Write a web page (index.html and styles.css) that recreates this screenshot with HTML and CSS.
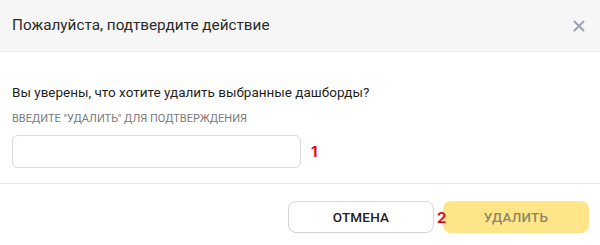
FILE: index.html
```html
<!DOCTYPE html>
<html lang="ru">
<head>
<meta charset="utf-8">
<link rel="stylesheet" href="styles.css">
</head>
<body>
<div class="modal">
  <div class="header">
    <div class="title">Пожалуйста, подтвердите действие</div>
    <svg class="close" width="12" height="12" viewBox="0 0 12 12"><path d="M1.5 1.5 L10.5 10.5 M10.5 1.5 L1.5 10.5" stroke="#9ea3b3" stroke-width="2" stroke-linecap="round"/></svg>
  </div>
  <div class="body">
    <p class="question">Вы уверены, что хотите удалить выбранные дашборды?</p>
    <div class="label">ВВЕДИТЕ "УДАЛИТЬ" ДЛЯ ПОДТВЕРЖДЕНИЯ</div>
    <div class="field-row">
      <input class="input" type="text">
      <span class="mark">1</span>
    </div>
  </div>
  <div class="footer">
    <button class="btn btn-cancel">ОТМЕНА</button>
    <button class="btn btn-delete">УДАЛИТЬ</button>
    <span class="mark mark-2">2</span>
  </div>
</div>
</body>
</html>
```
FILE: styles.css
```css
html, body {
  margin: 0;
  padding: 0;
  background: #ffffff;
}
body {
  font-family: "Roboto", "Inter", sans-serif;
  color: #222;
}
.modal {
  width: 600px;
  height: 245px;
  display: flex;
  flex-direction: column;
}
.header {
  height: 52px;
  box-sizing: border-box;
  background: #f6f6f6;
  border-bottom: 1px solid #ececec;
  display: flex;
  align-items: center;
  justify-content: space-between;
  padding: 0 15px 0 12px;
}
.title {
  font-size: 15.3px;
  color: #2b2b2b;
  font-weight: 400;
  padding-bottom: 1px;
}
.close {
  display: block;
}
.body {
  padding: 31px 12px 15px 12px;
  border-bottom: 1px solid #e6e6e6;
}
.question {
  margin: 0;
  font-size: 13.5px;
  line-height: 18px;
  color: #1f1f1f;
}
.label {
  margin-top: 11px;
  font-size: 11px;
  line-height: 14px;
  color: #7a7a7a;
}
.field-row {
  margin-top: 9px;
  display: flex;
  align-items: center;
  gap: 10px;
}
.input {
  width: 289px;
  height: 33px;
  box-sizing: border-box;
  border: 1px solid #d9d9df;
  border-radius: 6px;
  margin: 0;
  padding: 0 10px;
  font: inherit;
  outline: none;
}
.mark {
  color: #e0101a;
  font-weight: 700;
  font-size: 15px;
  font-family: "Inter", sans-serif;
}
.footer {
  position: relative;
  display: flex;
  justify-content: flex-end;
  gap: 9px;
  padding: 17px 11px 0 0;
}
.btn {
  width: 146px;
  height: 32px;
  border-radius: 8px;
  font-family: "Roboto", "Inter", sans-serif;
  font-size: 13.5px;
  font-weight: 500;
  letter-spacing: 0.2px;
  cursor: pointer;
}
.btn-cancel {
  background: #fff;
  border: 1px solid #d5d5d5;
  color: #222;
}
.btn-delete {
  background: #fee688;
  border: none;
  color: #8c8566;
}
.mark-2 {
  position: absolute;
  left: 437px;
  top: 24px;
}
```
